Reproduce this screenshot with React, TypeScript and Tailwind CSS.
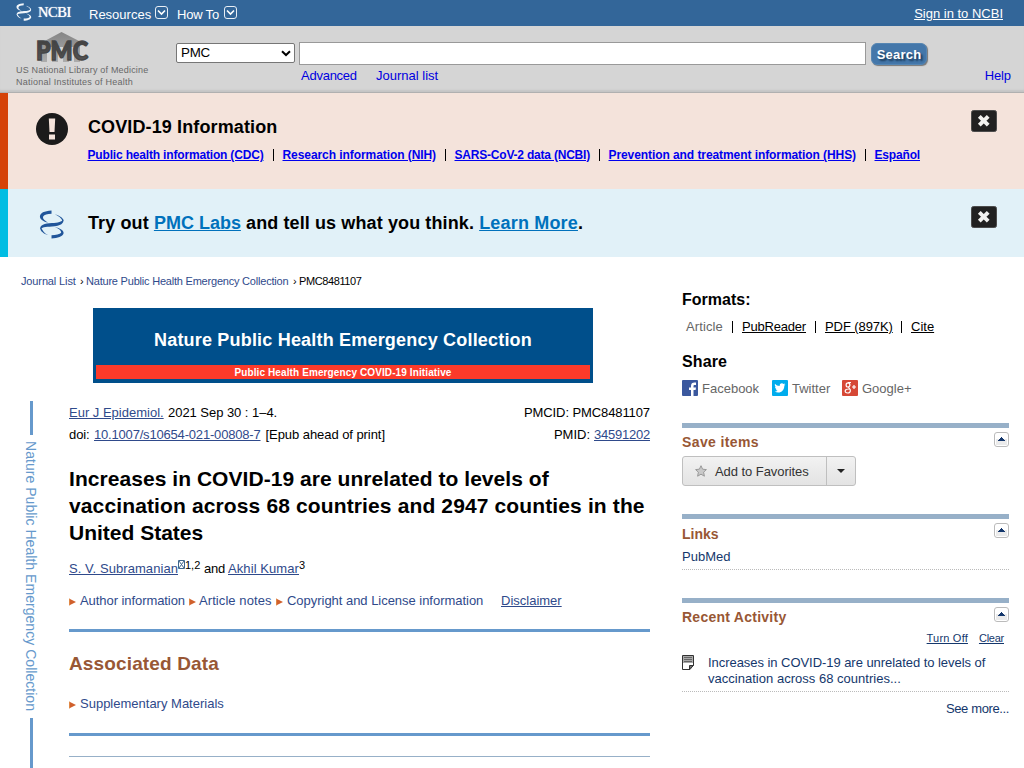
import type { ReactNode } from "react";

function Chevron() {
  return (
    <svg className="mt-[-1px] block h-[13px] w-[13px] shrink-0" viewBox="0 0 13 13" fill="none">
      <rect x="0.5" y="0.5" width="12" height="12" rx="2.5" stroke="#e8eef5" />
      <path d="M3 4.500L6.500 8L10 4.500" stroke="#fff" strokeWidth="1.600" />
    </svg>
  );
}

function Helix({ className, color }: { className: string; color: string }) {
  return (
    <svg className={className} viewBox="0 0 26 30" fill={color}>
      <path d="M12.500 .5C5 1 .5 3 .5 7C.8 10 4 12 9 13C4.500 10.500 3 8.500 4 6.500C5 4.800 8 4 12.500 3.800Z" />
      <path d="M.8 20C.3 15.500 5 14 13 13.500C19 13 23.500 12.500 24.500 9.500C26 13.500 22 16.500 13 17C6 17.300 2 18 .8 20Z" />
      <path d="M16 4.500C20 5.500 24.500 8 25 11L23.800 11.500C23 8.500 20 6.500 16 4.500Z" />
      <path d="M.8 19C1 22 4.500 25 9 25.800C5 24 3.500 21.500 2 18.500Z" />
      <path d="M16 17.500C21 18.500 25.500 21 25 24C24 27.500 19 29 12.500 29.500V26C17 26 21 25.200 22.500 23.500C22.500 21 20 19 16 17.500Z" />
    </svg>
  );
}

function CloseButton() {
  return (
    <svg className="block h-[22px] w-[26px]" viewBox="0 0 26 22">
      <rect x=".5" y=".5" width="25" height="21" rx="2" fill="#212121" stroke="#4c4c4c" />
      <path d="M8.300 6.300L17.200 15.200M17.200 6.300L8.300 15.200" stroke="#f2f2f0" strokeWidth="3.900" />
    </svg>
  );
}

function Arrow() {
  return (
    <svg className="mt-px block h-2 w-[7px] shrink-0" viewBox="0 0 7 8">
      <path d="M0 .5L7 4L0 7.500Z" fill="#d0602c" />
      <path d="M0 .5V7.500" stroke="#f0b060" />
    </svg>
  );
}

function Divider() {
  return <span className="h-3 w-px shrink-0 bg-black" />;
}

function PortletHead({ children }: { children: ReactNode }) {
  return (
    <div className="flex h-7 items-start justify-between border-t-[5px] border-[#97b0c8]">
      <h3 className="mt-1 text-[14px] leading-5 font-bold text-[#985735]">{children}</h3>
      <svg className="mt-1 block h-[15px] w-[15px]" viewBox="0 0 15 15">
        <rect x=".5" y=".5" width="14" height="14" rx="2.500" fill="#fff" stroke="#bbb" />
        <rect x="2" y="7" width="11" height="6" fill="#ebebeb" />
        <path d="M4 9V8H5V7H6V6H7V5H8V6H9V7H10V8H11V9Z" fill="#14376c" />
      </svg>
    </div>
  );
}

export default function App() {
  return (
    <div className="h-[768px] w-[1024px] overflow-hidden bg-white font-['Liberation_Sans',Arial,sans-serif] text-[13px] leading-4 whitespace-nowrap text-black">
      <header className="flex h-[26px] items-center bg-[#336699] text-white">
        <Helix className="mt-[-2px] ml-4 block h-[18px] w-4" color="#f2f6fa" />
        <span className="mt-[-2px] ml-[6px] w-[51px] font-['Liberation_Serif',serif] text-[14.5px] leading-4 tracking-[-0.4px] text-white [text-shadow:0_0_1px_#ffffff]">NCBI</span>
        <span className="mt-[3px] w-[66px]">Resources</span>
        <Chevron />
        <span className="mt-[3px] ml-[9px] w-[47px] tracking-[-0.2px]">How To</span>
        <Chevron />
        <a className="mt-px mr-[21px] ml-auto underline">Sign in to NCBI</a>
      </header>

      <div className="flex h-[67px] border-b border-[#b0b0b0] bg-[#d5d5d5] shadow-[inset_0_-3px_2px_-1px_#c4c4c4]">
        <div className="w-[176px] pt-[6px] pl-4 text-[9px] leading-3 text-[#686868]">
          <svg className="ml-[18px] block h-8 w-[58px] overflow-visible" viewBox="0 0 58 32">
            <defs>
              <linearGradient id="pmc" x1="0" y1="0" x2="0" y2="1">
                <stop offset="0" stopColor="#3c3c3c" />
                <stop offset="1" stopColor="#585858" />
              </linearGradient>
              <linearGradient id="house" x1="0" y1="0" x2="0" y2="1">
                <stop offset="0" stopColor="#858585" />
                <stop offset="1" stopColor="#acacac" />
              </linearGradient>
            </defs>
            <path d="M7 11L27.500 0L49 11H46V30H40V15H35V30H29V15H24V30H18V15H13V30H7Z" fill="url(#house)" />
            <text x="2" y="27.500" textLength="52" lengthAdjust="spacingAndGlyphs" fontFamily="Lato" fontWeight="900" fontSize="26" fill="url(#pmc)" stroke="#464646" strokeWidth="1.400">PMC</text>
          </svg>
          <div className="tracking-[0.19px]">US National Library of Medicine</div>
          <div className="tracking-[0.24px]">National Institutes of Health</div>
        </div>
        <div className="flex-1 pt-4">
          <div className="flex items-start">
            <div className="mt-px flex h-5 w-[119px] items-center justify-between rounded-[2px] border border-[#767676] bg-white pr-[3px] pl-1 text-[13.33px]">
              <span className="tracking-[-0.2px]">PMC</span>
              <svg className="block h-[7px] w-[10px]" viewBox="0 0 10 7">
                <path d="M1 1.200L5 5L9 1.200" fill="none" stroke="#000" strokeWidth="2" />
              </svg>
            </div>
            <div className="ml-1 h-[23px] w-[567px] border border-[#999] bg-white" />
            <div className="mt-px ml-[5px] h-[22px] w-[56px] rounded-[6px] border border-[#5686b3] bg-[#4477aa] text-center text-[13px] leading-[21px] font-bold tracking-[0.2px] text-white shadow-[1px_1px_1px_#777] [text-shadow:2px_2px_2px_#173553]">
              Search
            </div>
          </div>
          <div className="mt-[3px] flex text-[#0000e0]">
            <span className="ml-[125px] w-[75px] tracking-[-0.25px]">Advanced</span>
            <span>Journal list</span>
            <span className="mr-[13px] ml-auto tracking-[-0.1px]">Help</span>
          </div>
        </div>
      </div>

      <section className="flex h-24 border-l-8 border-[#d54309] bg-[#f4e3db]">
        <svg className="mt-5 ml-7 block h-8 w-8" viewBox="0 0 32 32">
          <circle cx="16" cy="16" r="16" fill="#1b1b1b" />
          <path d="M12.800 5.500H19.200L18.500 19H13.500ZM13 21.500H19V26.500H13Z" fill="#f4e3db" />
        </svg>
        <div className="ml-5 flex-1 pt-6">
          <h2 className="text-[18px] leading-5 font-bold tracking-[0.12px]">COVID-19 Information</h2>
          <div className="mt-[10px] ml-[-0.5px] flex items-center text-[12px] font-bold text-[#0000ee]">
            <a className="w-[176px] tracking-[-0.172px] underline">Public health information (CDC)</a>
            <span className="ml-[9px] h-3 w-px bg-black" />
            <a className="ml-[9px] w-[153px] tracking-[-0.071px] underline">Research information (NIH)</a>
            <span className="ml-[9px] h-3 w-px bg-black" />
            <a className="ml-[9px] w-[135px] tracking-[-0.205px] underline">SARS-CoV-2 data (NCBI)</a>
            <span className="ml-[9px] h-3 w-px bg-black" />
            <a className="ml-[9px] w-[247px] tracking-[-0.076px] underline">Prevention and treatment information (HHS)</a>
            <span className="ml-[9px] h-3 w-px bg-black" />
            <a className="ml-[9px] tracking-[-0.168px] underline">Español</a>
          </div>
        </div>
        <div className="mt-[17px] mr-[27px]"><CloseButton /></div>
      </section>

      <section className="flex h-[68px] border-l-8 border-[#00bde3] bg-[#e1f1f8]">
        <Helix className="mt-[21px] ml-[31px] block h-[29px] w-[26px]" color="#20559a" />
        <h2 className="mt-6 ml-[23px] flex-1 text-[18px] leading-5 font-bold tracking-[0.11px]">
          Try out <a className="tracking-normal text-[#0071bc] underline">PMC Labs</a> and tell us what you think.{" "}
          <a className="tracking-[0.18px] text-[#0071bc] underline">Learn More</a>.
        </h2>
        <div className="mt-[17px] mr-[27px]"><CloseButton /></div>
      </section>

      <div className="flex">
        <main className="w-[650px]">
          <nav className="flex pt-4 pl-[21px] text-[11px] text-[#2f4a8b]">
            <a className="w-[59px] tracking-[-0.13px]">Journal List</a>
            <span className="w-[6px] text-black">›</span>
            <a className="w-[207px] tracking-[-0.21px]">Nature Public Health Emergency Collection</a>
            <span className="w-[6px] text-black">›</span>
            <span className="tracking-[-0.4px] text-black">PMC8481107</span>
          </nav>

          <div className="mt-[19px] ml-[93px] flex h-[75px] w-[500px] flex-col bg-[#004f8b] px-[3px] pb-[4px] text-center font-bold text-white">
            <div className="mt-[21px] text-[18px] leading-[22px] tracking-[0.193px]">Nature Public Health Emergency Collection</div>
            <div className="mt-auto h-[14px] bg-[#fc3a2a] text-[10px] leading-[15px] tracking-[0.11px]">Public Health Emergency COVID-19 Initiative</div>
          </div>

          <div className="mt-[18px] flex">
            <div className="flex h-[367px] w-[69px] flex-col items-center pr-[6px]">
              <div className="h-[34px] w-[3px] bg-[#6699cc]" />
              <div className="mt-[6px] mr-px h-[271px] text-[14px] leading-4 tracking-[0.038px] text-[#6699cc] [writing-mode:vertical-rl]">Nature Public Health Emergency Collection</div>
              <div className="mt-[6px] w-[3px] flex-1 bg-[#6699cc]" />
            </div>

            <div className="w-[581px] text-[#2f4a8b]">
              <div className="mt-1 flex">
                <a className="w-[94px] underline">Eur J Epidemiol.</a>
                <span className="ml-[5px] tracking-[-0.04px] text-black">2021 Sep 30 : 1–4.</span>
                <span className="ml-auto tracking-[-0.097px] text-black">PMCID: PMC8481107</span>
              </div>
              <div className="mt-[6px] flex">
                <span className="w-[25px] tracking-[-0.1px] text-black">doi:</span>
                <a className="tracking-[-0.185px] underline">10.1007/s10654-021-00808-7</a>
                <span className="ml-[5px] tracking-[-0.06px] text-black">[Epub ahead of print]</span>
                <span className="mr-1 ml-auto text-black">PMID:</span>
                <a className="tracking-[-0.23px] underline">34591202</a>
              </div>

              <h1 className="mt-[22px] text-[21px] leading-[27px] font-bold text-black">
                <span className="block tracking-[0.05px]">Increases in COVID-19 are unrelated to levels of</span>
                <span className="block tracking-[0.13px]">vaccination across 68 countries and 2947 counties in the</span>
                <span className="block">United States</span>
              </h1>

              <div className="mt-[15px] flex h-4">
                <a className="tracking-[0.063px] underline">S. V. Subramanian</a>
                <svg className="mt-[-1px] block h-[9px] w-[7px]" viewBox="0 0 7 9" fill="none" stroke="#3f668c">
                  <path d="M.5 .5H6.500V8.500H.5ZM1 1L6 8M6 1L1 8" />
                </svg>
                <span className="mt-[-4px] w-[19px] text-[11px] text-black">1,2</span>
                <span className="w-6 tracking-[-0.23px] text-black">and</span>
                <a className="tracking-[0.084px] underline">Akhil Kumar</a>
                <span className="mt-[-4px] text-[11px] text-black">3</span>
              </div>

              <div className="mt-4 flex items-center">
                <Arrow />
                <a className="ml-1 w-[109px] tracking-[-0.068px]">Author information</a>
                <Arrow />
                <a className="ml-[3px] w-[77px] tracking-[0.08px]">Article notes</a>
                <Arrow />
                <a className="ml-1 w-[214px] tracking-[-0.03px]">Copyright and License information</a>
                <a className="underline">Disclaimer</a>
              </div>

              <div className="mt-5 h-[3px] bg-[#6699cc]" />
              <h2 className="mt-5 text-[19px] leading-6 font-bold tracking-[0.14px] text-[#985735]">Associated Data</h2>
              <div className="mt-5 flex items-center">
                <Arrow />
                <a className="ml-1">Supplementary Materials</a>
              </div>
              <div className="mt-[21px] h-[3px] bg-[#6699cc]" />
              <div className="mt-5 h-px bg-[#97b0c8]" />
            </div>
          </div>
        </main>

        <aside className="ml-8 w-[327px] pt-[33px] text-[#14376c]">
          <h3 className="text-[16px] leading-5 font-bold text-black">Formats:</h3>
          <div className="mt-[9px] flex items-center text-black">
            <span className="mr-[9px] ml-1 w-[37px] tracking-[0.1px] text-[#666]">Article</span>
            <Divider />
            <a className="mx-[9px] w-[64px] tracking-[-0.196px] underline">PubReader</a>
            <Divider />
            <a className="mx-[9px] w-[67px] tracking-[-0.09px] underline">PDF (897K)</a>
            <Divider />
            <a className="ml-[9px] underline">Cite</a>
          </div>

          <h3 className="mt-[17px] text-[16px] leading-5 font-bold tracking-[0.1px] text-black">Share</h3>
          <div className="mt-2 flex h-4 items-center text-[#666]">
            <svg className="block h-4 w-4" viewBox="0 0 16 16">
              <rect width="16" height="16" rx="1" fill="#3b589e" />
              <path d="M9 16V10H7V7.500H9V6C9 3.500 10.300 2.500 12.500 2.500H14V5H12.700C11.800 5 11.500 5.400 11.500 6.200V7.500H14L13.600 10H11.500V16Z" fill="#fff" />
            </svg>
            <a className="mt-[2px] ml-1 w-[70px]">Facebook</a>
            <svg className="block h-4 w-4" viewBox="0 0 16 16">
              <rect width="16" height="16" rx="1" fill="#00aced" />
              <path d="M3 3.800C4.200 5.200 5.700 6 7.700 6C7.400 4.500 8.500 3.300 9.900 3.300C10.600 3.300 11.100 3.600 11.500 4L13 3.500L12.200 4.800L13.400 4.600L12.300 5.700C12.500 9.300 9.800 12.600 6.200 12.600C4.900 12.600 3.700 12.200 2.800 11.600C4 11.700 5 11.300 5.800 10.800C4.800 10.700 4.100 10 3.800 9.200H4.700C3.700 8.800 3 8 3 7L3.900 7.200C3 6.400 2.500 5 3 3.800Z" fill="#fff" />
            </svg>
            <a className="mt-[2px] ml-1 w-[50px]">Twitter</a>
            <svg className="block h-4 w-4" viewBox="0 0 16 16">
              <rect width="16" height="16" rx="1" fill="#d64836" />
              <g fill="none" stroke="#fff" strokeWidth="1.200">
                <ellipse cx="6" cy="4.900" rx="1.900" ry="2.100" />
                <path d="M6 2.500H9M7.300 6.500C5.600 8 7.800 8 8.300 10C8.700 12 7.300 13 5.700 13C4 13 3 12 3.200 10.800C3.400 9.500 5 9 7 9M10 7H14M12 5V9" />
              </g>
            </svg>
            <a className="mt-[2px] ml-1">Google+</a>
          </div>

          <div className="mt-[27px]" />
          <PortletHead><span className="tracking-[0.38px]">Save items</span></PortletHead>
          <div className="mt-[5px] flex h-[30px] w-[174px] items-center rounded-[3px] border border-[#bfbfbf] bg-linear-to-b from-[#f2f2f2] to-[#e3e3e3] text-[#333]">
            <svg className="ml-3 block h-3 w-3" viewBox="0 0 12 12">
              <path d="M6 .7L7.600 4.200L11.400 4.600L8.600 7.200L9.400 11.200L6 9.200L2.600 11.200L3.400 7.200L.6 4.600L4.400 4.200Z" fill="#c9c9c9" stroke="#999" />
            </svg>
            <span className="mt-px ml-2 w-[111px] tracking-[-0.06px]">Add to Favorites</span>
            <span className="flex h-full flex-1 items-center justify-center border-l border-[#bfbfbf]">
              <svg className="block h-1 w-2" viewBox="0 0 8 4"><path d="M0 0H8L4 4Z" fill="#222" /></svg>
            </span>
          </div>

          <div className="mt-7" />
          <PortletHead><span className="relative top-px">Links</span></PortletHead>
          <div className="mt-[6px] h-[22px] border-b border-dotted border-[#bbb] pt-px">PubMed</div>

          <div className="mt-7" />
          <PortletHead><span className="tracking-[0.257px]">Recent Activity</span></PortletHead>
          <div className="mt-1 flex justify-end pr-[5px] text-[11px]">
            <a className="tracking-[0.2px] underline">Turn Off</a>
            <a className="ml-[11px] tracking-[-0.25px] underline">Clear</a>
          </div>
          <div className="mt-2 flex h-[38px] border-b border-dotted border-[#bbb] pt-px">
            <svg className="block h-[15px] w-3" viewBox="0 0 12 15">
              <path d="M.5 .5H11.500V10L8 14.500H.5Z" fill="#fff" stroke="#333" />
              <path d="M1 1H11V8H1Z" fill="#aaa" />
              <path d="M2 2.500H10M2 4.500H10M2 6.500H10" stroke="#666" />
              <path d="M7.500 14V10.500H11.500Z" fill="#777" stroke="#333" />
            </svg>
            <div className="ml-[14px]">
              <div className="tracking-[-0.05px]">Increases in COVID-19 are unrelated to levels of</div>
              <div className="tracking-[0.02px]">vaccination across 68 countries...</div>
            </div>
          </div>
          <div className="mt-[9px] text-right tracking-[-0.38px]">See more...</div>
        </aside>
      </div>
    </div>
  );
}
